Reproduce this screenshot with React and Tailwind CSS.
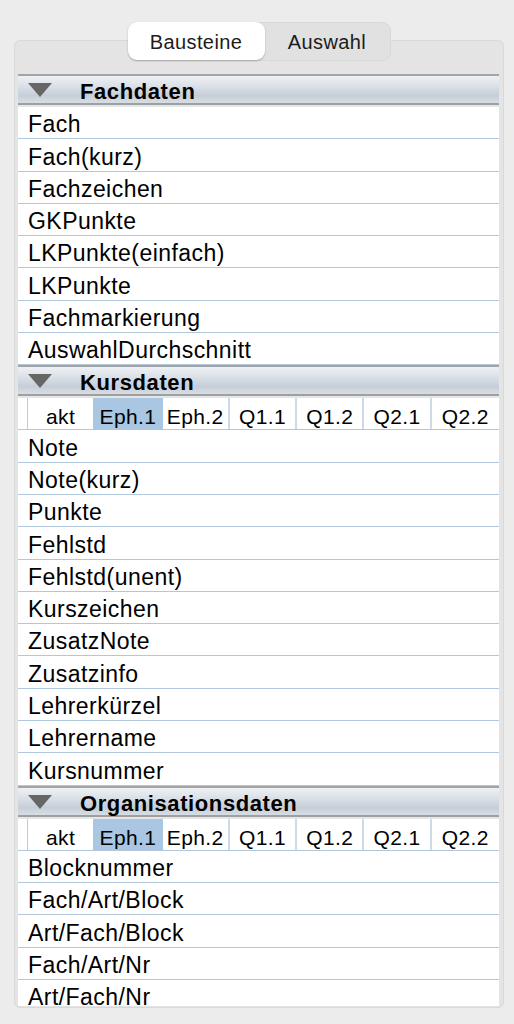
import React from "react";

const fachRows = ["Fach", "Fach(kurz)", "Fachzeichen", "GKPunkte", "LKPunkte(einfach)", "LKPunkte", "Fachmarkierung", "AuswahlDurchschnitt"];
const kursRows = ["Note", "Note(kurz)", "Punkte", "Fehlstd", "Fehlstd(unent)", "Kurszeichen", "ZusatzNote", "Zusatzinfo", "Lehrerkürzel", "Lehrername", "Kursnummer"];
const orgRows = ["Blocknummer", "Fach/Art/Block", "Art/Fach/Block", "Fach/Art/Nr", "Art/Fach/Nr"];
const sems = ["akt", "Eph.1", "Eph.2", "Q1.1", "Q1.2", "Q2.1", "Q2.2"];

function Header({ title }) {
  return (
    <div className="shrink-0 border-b-2 border-[#e4e6e8]">
      <div className="h-[31px] flex items-center border-t-2 border-b-2 border-t-[#a4a4a4] border-b-[#9f9f9f] bg-[linear-gradient(to_bottom,#eef1f4_0%,#dfe4ea_30%,#c6ced8_72%,#d8dde4_100%)]">
        <svg className="ml-[10px] w-[24px] h-[14px] mt-[1px]" viewBox="0 0 24 14">
          <polygon points="0,0 24,0 12,14" fill="#666666" />
        </svg>
        <span className="ml-[28px] font-bold text-[22px] tracking-[0.6px] leading-none text-black pt-[5px]">{title}</span>
      </div>
    </div>
  );
}

function Row({ text }) {
  return (
    <div className="h-[32.3px] shrink-0 border-b border-[#b0c7dc] pl-[10px] flex items-end pb-[2px] text-[23px] tracking-[0.45px] leading-none text-black whitespace-nowrap">
      {text}
    </div>
  );
}

function SemRow() {
  return (
    <div className="h-[32px] shrink-0 flex border-b border-[#b0c7dc] pl-[9px]">
      <div className="flex-1 grid grid-cols-7 border-l border-[#b9cbdd]">
        {sems.map((s, i) => (
          <div
            key={s}
            className={
              "flex items-end justify-center pb-[2px] text-[21px] tracking-[0.4px] leading-none text-black " +
              (i === 1
                ? "bg-[#a9c6e2] border-r-2 border-[#a9c6e2]"
                : i === 0
                ? "border-r-2 border-[#a9c6e2]"
                : i === 6
                ? ""
                : "border-r-2 border-[#cddae8]")
            }
          >
            {s}
          </div>
        ))}
      </div>
    </div>
  );
}

export default function App() {
  return (
    <div className="min-h-screen w-[514px] bg-[#ececec] pt-[22px] font-['Liberation_Sans',Arial,sans-serif]">
      <div className="w-[490px] ml-[14px]">
        <div className="relative z-10 mx-auto w-[263px] h-[39px] flex rounded-[9px] bg-[#e1e1e1] border border-[#d8d8d8]">
          <div className="w-[137px] h-full -ml-px -mt-px box-content rounded-[9px] bg-white shadow-[0_1px_2px_rgba(0,0,0,0.25)] flex items-center justify-center pt-[1px] text-[20px] tracking-[0.4px] text-[#1c1c1c]">
            Bausteine
          </div>
          <div className="flex-1 flex items-center justify-center pt-[1px] text-[20px] tracking-[0.4px] text-[#1c1c1c]">Auswahl</div>
        </div>
        <div className="-mt-[21px] h-[968px] bg-[#e4e4e4] rounded-[6px] border border-[#d9d9d9] pt-[33px] pl-[3px] pr-[4px] pb-[1px]">
          <div className="h-full bg-white overflow-hidden flex flex-col">
            <Header title="Fachdaten" />
            {fachRows.map((t) => (
              <Row key={t} text={t} />
            ))}
            <Header title="Kursdaten" />
            <SemRow />
            {kursRows.map((t) => (
              <Row key={t} text={t} />
            ))}
            <Header title="Organisationsdaten" />
            <SemRow />
            {orgRows.map((t) => (
              <Row key={t} text={t} />
            ))}
          </div>
        </div>
      </div>
    </div>
  );
}
